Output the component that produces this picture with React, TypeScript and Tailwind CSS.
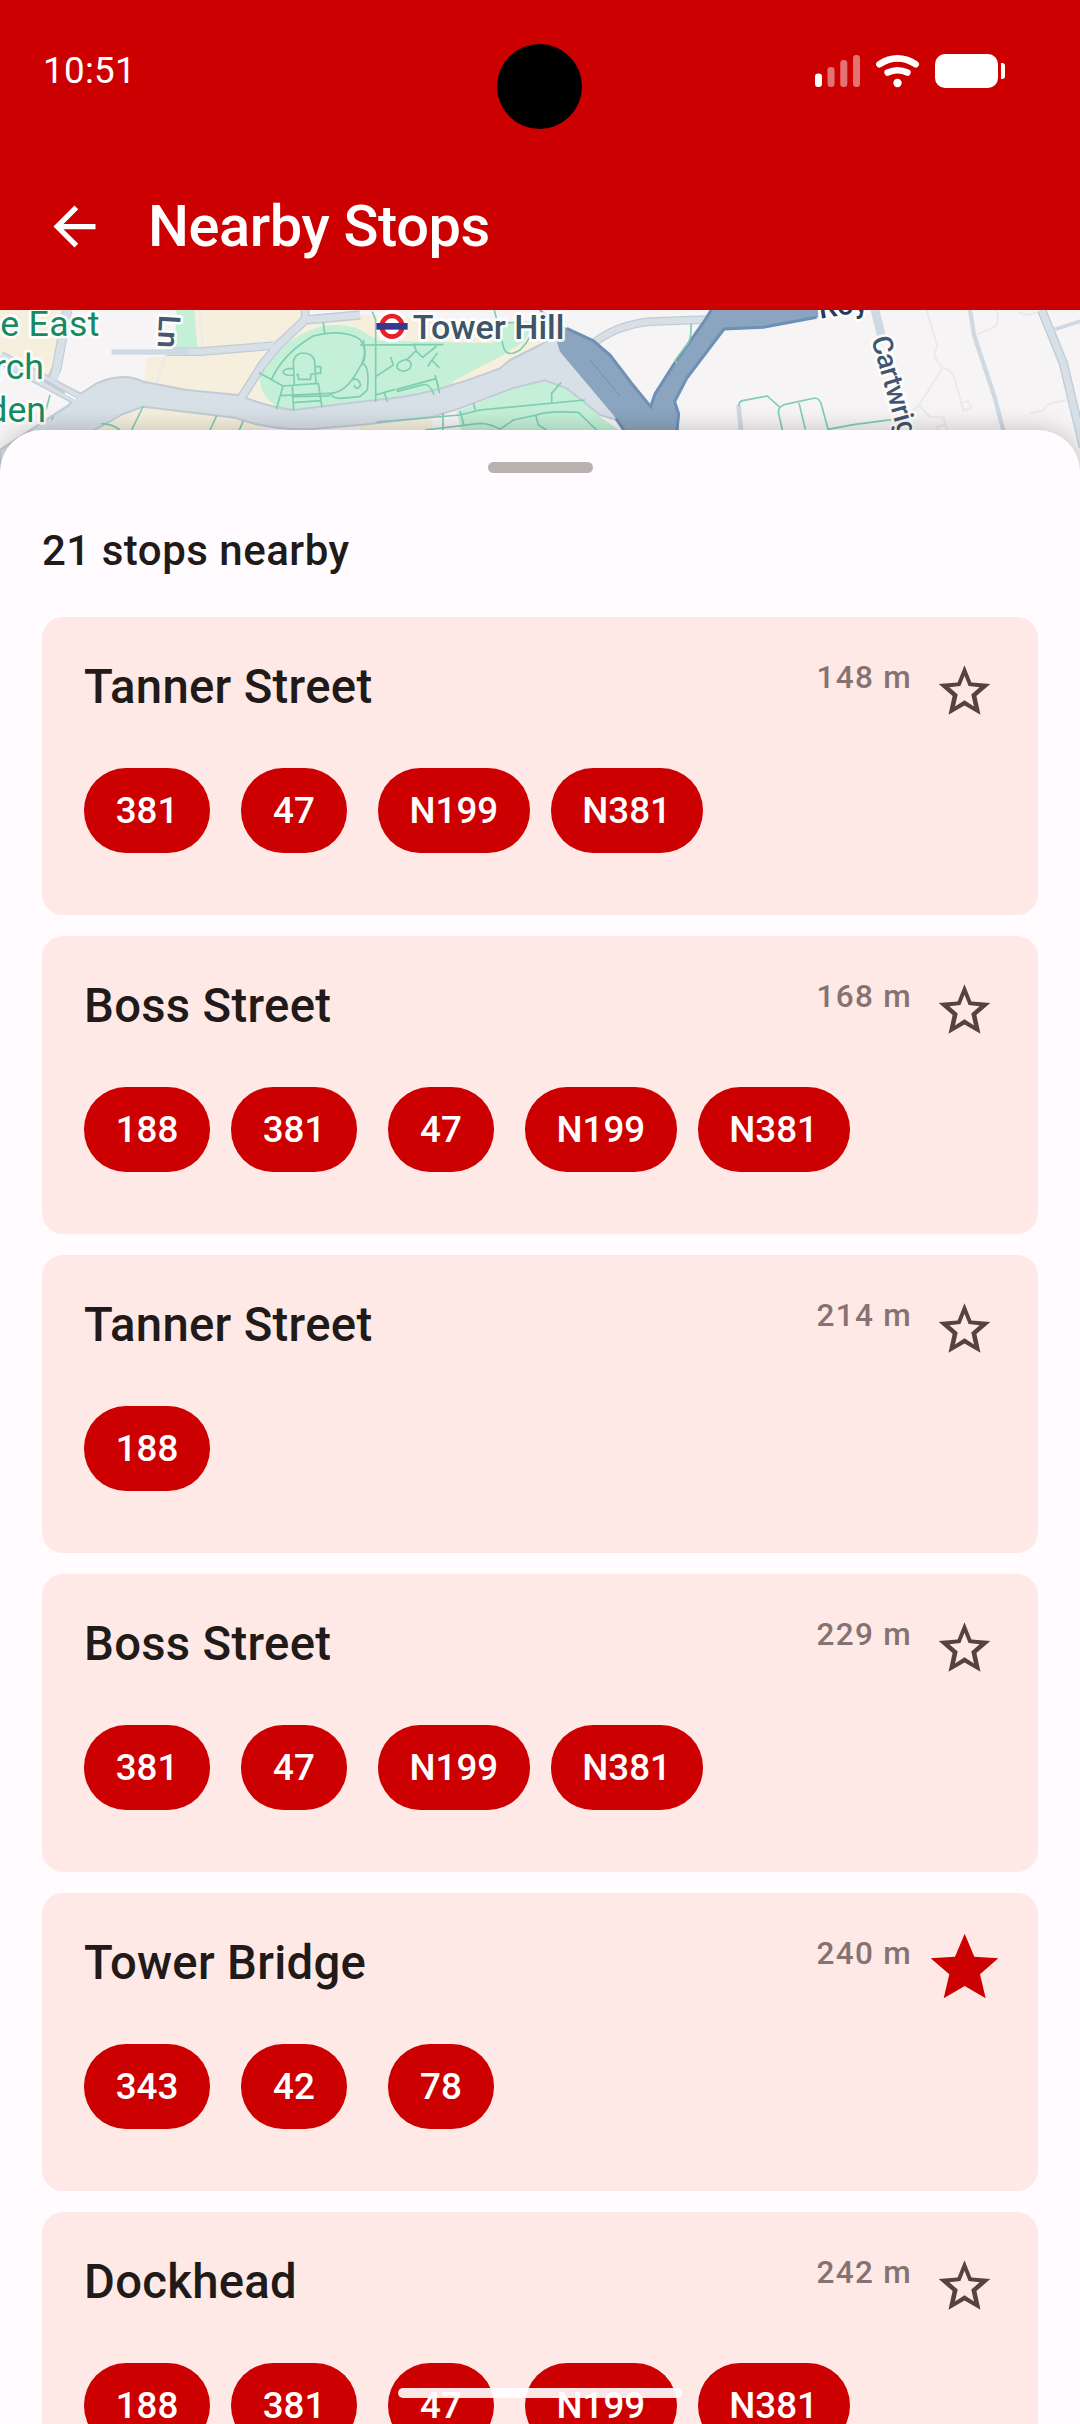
import type { ReactNode } from "react";

const stops = [
  { name: "Tanner Street", distance: "148 m", routes: ["381", "47", "N199", "N381"], starred: false },
  { name: "Boss Street", distance: "168 m", routes: ["188", "381", "47", "N199", "N381"], starred: false },
  { name: "Tanner Street", distance: "214 m", routes: ["188"], starred: false },
  { name: "Boss Street", distance: "229 m", routes: ["381", "47", "N199", "N381"], starred: false },
  { name: "Tower Bridge", distance: "240 m", routes: ["343", "42", "78"], starred: true },
  { name: "Dockhead", distance: "242 m", routes: ["188", "381", "47", "N199", "N381"], starred: false },
];

function StatusIcons() {
  return (
    <svg width="192" height="36" viewBox="814 53 192 36" fill="#fff">
      <rect x="815" y="73.5" width="7" height="13.5" rx="3.3" />
      <g opacity="0.45">
        <rect x="827.5" y="67" width="7" height="20" rx="3.3" />
        <rect x="840.3" y="60" width="7" height="27" rx="3.3" />
        <rect x="853" y="55" width="7" height="32" rx="3.3" />
      </g>
      <g fill="none" stroke="#fff" strokeWidth="6.6" strokeLinecap="round">
        <path d="M879.4 64.2 Q897.5 52.6 915.7 64.2" />
        <path d="M887.7 72.6 Q897.5 68 907.4 72.6" />
      </g>
      <circle cx="897.5" cy="83" r="4.2" />
      <rect x="935" y="54" width="63" height="34" rx="10" />
      <path d="M1001 63h1a3 3 0 0 1 3 3v10a3 3 0 0 1-3 3h-1z" />
    </svg>
  );
}

function BackArrow() {
  return (
    <svg width="63" height="63" viewBox="0 0 24 24" fill="#fff">
      <path d="M20 11H7.83l5.59-5.59L12 4l-8 8 8 8 1.41-1.41L7.83 13H20v-2z" />
    </svg>
  );
}

function Star({ filled }: { filled: boolean }) {
  if (filled) {
    return (
      <svg width="84" height="84" viewBox="0 0 84 84">
        <path d="M42.7 9.7L52.3 32.7L76.3 34.3L58 50.3L63.7 74.3L42.7 62L21.7 74.3L27.3 50.3L8.7 34.3L33 32.7Z" fill="#cc0000" />
      </svg>
    );
  }
  return (
    <svg width="84" height="84" viewBox="0 -1.8 84 84">
      <path
        fillRule="evenodd"
        d="M42.5 15.5L49.4 32.7L68.3 34.2L54.4 46.3L58.5 65L42.5 55.7L26.5 65L30.6 46.3L16.7 34.2L35.6 32.7ZM42.5 26L46.6 36.2L57.6 37.4L49.3 44.8L52 56.6L42.5 50.4L33 56.6L35.7 44.8L27.4 37.4L38.4 36.2Z"
        fill="#534341"
      />
    </svg>
  );
}

type LabelProps = {
  children: ReactNode;
  x?: number;
  y?: number;
  fontSize: number;
  fontWeight?: number;
  letterSpacing?: number;
  fill: string;
  transform?: string;
  textAnchor?: "start" | "end";
};

function Label({ children, fontWeight = 500, ...rest }: LabelProps) {
  return (
    <text {...rest} fontWeight={fontWeight} stroke="#fff" strokeOpacity="0.9" strokeWidth="16" strokeLinejoin="round" paintOrder="stroke">
      {children}
    </text>
  );
}

function MapStrip() {
  return (
    <svg className="block h-[162px] w-full shrink-0 font-[Roboto,sans-serif]" viewBox="0 30 3240 486">
      <rect y="30" width="3240" height="486" fill="#f6f4f5" />

      {/* blocks */}
      <g fill="#f6efdd">
        <path d="M0 30H190L175 190L150 238L0 160Z" />
        <path d="M525 30H910V70L820 130L600 145H525Z" />
        <path d="M440 175L505 165L800 152L720 287L470 258L432 245Z" />
        <path d="M770 220L915 72L1080 45L1480 60L1640 100V160L1360 260L1080 305L880 330L735 290Z" />
        <path d="M290 390L430 318L700 350L810 390Z" />
        <path d="M1080 372L1298 352V390H1080Z" />
      </g>
      <rect x="1300" y="30" width="180" height="35" fill="#f6f4f5" />

      {/* parks */}
      <g fill="#c3f0d6">
        <path d="M530 30H583L592 142H525Z" />
        <path d="M780 222C795 190 850 115 960 80C1010 70 1060 75 1090 95L1135 122L1480 130V60L1600 80L1570 125L1500 170L1440 200L1357 245L1364 262L1240 290L1080 312L960 320L880 328C820 325 775 290 780 222Z" />
        <path d="M1370 335L1540 265L1640 240L1720 270L1800 350L1870 400H1385Z" />
      </g>

      {/* faint footpaths */}
      <g fill="none" stroke="#ebe9ec" strokeWidth="6">
        <path d="M598 30L608 140M498 165L468 256" />
        <path d="M2780 30L2812 140L2803 160Q2805 180 2828 203Q2855 210 2862 230L2890 332L2915 322L2903 303L2883 310M2828 203L2757 316L2735 335M2757 316L2790 350L2830 352L2842 390M2990 30Q3000 70 2985 80L2930 103M3055 35Q3075 50 3110 38M3090 340L3130 332Q3140 310 3160 308L3200 300M2810 390V380L2840 372" />
      </g>

      {/* roads: edge first, then fill */}
      <g fill="none" strokeLinejoin="round">
        <g stroke="#c2ccd6">
          <path d="M202 30L170 205L155 240" strokeWidth="30" />
          <path d="M0 172L240 300" strokeWidth="40" />
          <path d="M500 155H600L820 137" strokeWidth="26" />
          <path d="M720 300L790 190L835 135L915 60L1080 45" strokeWidth="28" />
          <path d="M915 30V60" strokeWidth="26" />
          <path d="M1780 130Q1850 75 1950 65L2140 58" strokeWidth="26" />
          <path d="M3125 30L3190 190L3250 440" strokeWidth="28" />
        </g>
        <path d="M0 450L205 316L240 282L290 250Q370 215 430 245L560 270L715 285Q800 320 880 330L1080 305C1240 290 1300 280 1500 205L1530 180L1620 135L1700 90L1900 350L1850 360L1800 345L1700 265L1635 241L1540 264L1380 325L1300 350L1080 375L930 388Q800 390 705 353L430 320L370 342L280 392L100 516H0Z" fill="#d7dfe7" stroke="#c2ccd6" strokeWidth="6" />
        <g stroke="#d7dfe7">
          <path d="M202 30L170 205L160 240" strokeWidth="23" />
          <path d="M0 172L260 311" strokeWidth="32" />
          <path d="M500 155H600L820 137" strokeWidth="19" />
          <path d="M720 300L790 190L835 135L915 60L1080 45" strokeWidth="20" />
          <path d="M915 30V60" strokeWidth="18" />
          <path d="M1780 130Q1850 75 1950 65L2140 58" strokeWidth="19" />
          <path d="M3125 30L3190 190L3250 440" strokeWidth="20" />
        </g>
        <g stroke="#cfd9e3" strokeLinecap="round">
          <path d="M342 156H500M505 155H560" strokeWidth="16" />
          <path d="M2910 30L2922 105L2985 295L3012 400" strokeWidth="13" />
          <path d="M3165 88L3240 64" strokeWidth="11" />
          <path d="M2216 320L2224 400" strokeWidth="14" />
          <path d="M2625 30L2645 110" strokeWidth="26" />
        </g>
        <path d="M130 240L230 298" stroke="#c2ccd6" strokeWidth="10" />
        <path d="M195 279L228 298" stroke="#fff" strokeWidth="5" />
      </g>

      {/* river */}
      <path
        d="M1610 20L1700 85L1780 120L1830 165L1895 250L1950 322L1965 280L2020 195L2115 60L2135 20H2455V52L2290 82L2172 87L2060 235L2024 305L2038 342L2030 516H1960L1870 390L1840 345L1680 155L1660 90Z"
        fill="#8ba4bf"
      />
      <g fill="none" stroke="#6d90b4" strokeWidth="9">
        <path d="M1700 85L1780 122L1830 165L1895 250L1952 320L1965 282L2020 195L2115 60L2135 28" />
        <path d="M2450 52L2290 82L2172 87L2060 235L2024 305L2036 342L2030 400M1848 356L1874 394" />
        <path d="M1770 180L1860 288" strokeWidth="3" />
      </g>

      {/* park paths */}
      <g fill="none" stroke="#80cdb2" strokeWidth="5" strokeLinejoin="round">
        <path d="M970 68L974 98M815 237Q850 160 940 108Q1030 85 1080 118Q1110 165 1080 200Q1040 280 990 280L840 287M777 218L849 258L829 328M849 258L955 250L966 322M877 258L881 332M875 290L990 288M990 280Q1000 296 1020 295L1080 290M878 308L962 302" />
        <path d="M883 255L880 185Q885 160 910 159Q940 160 944 185L948 250M880 205Q850 205 849 217Q855 228 880 225M944 200H962V220H944M888 224H895V238H932V222H944M1055 240Q1075 230 1082 255Q1070 275 1062 255" />
        <path d="M1117 35L1127 60V305M1080 135L1240 134H1330M1090 120Q1100 160 1086 190Q1110 195 1102 270L1080 290M1240 130L1250 155L1268 172L1310 138M1313 158L1290 188L1284 200M1295 180L1318 203M1127 230L1180 195L1172 170M1220 180Q1240 185 1230 205Q1210 222 1192 205Q1185 185 1222 178L1250 150M1127 285L1185 268M1190 268L1308 236L1319 280M1190 268L1192 274L1270 254Q1290 250 1302 284M1305 225L1315 260M1152 275L1162 305" />
        <path d="M1483 30L1510 140Q1520 175 1560 150Q1580 130 1590 110M1490 68H1620M1130 366L1380 345L1440 330L1755 300M1655 308V280L1683 248M1420 310L1426 330M1380 332L1392 378M1329 340V390M1275 390L1440 370Q1470 370 1500 388L1540 360L1610 345Q1640 332 1735 337L1790 390M1607 345L1615 375L1640 390" />
        <path d="M430 318L395 390M303 372Q330 368 360 390M650 347L630 390M730 362L718 390M150 285L138 330M160 350L155 360M2073 70Q2075 120 2060 135L2026 180L2030 190" />
        <path d="M2218 318Q2215 305 2228 302L2302 288L2340 322L2352 314L2445 294Q2460 295 2466 320L2484 388L2560 374L2675 359M2340 322Q2332 330 2338 350L2347 390M2396 304L2416 388" />
      </g>

      <Label x={299} y={107} fontSize={107} fontWeight={400} letterSpacing={1} fill="#178a62" textAnchor="end">e East</Label>
      <Label x={132} y={236} fontSize={107} fontWeight={400} fill="#178a62" textAnchor="end">rch</Label>
      <Label x={138} y={365} fontSize={107} fontWeight={400} fill="#178a62" textAnchor="end">den</Label>
      <Label fontSize={90} fontWeight={600} fill="#46576f" transform="translate(478 44) rotate(93)">Ln</Label>
      <Label x={1238} y={116} fontSize={102} fill="#3e5468">Tower Hill</Label>
      <Label fontSize={88} fill="#263a59" transform="translate(2460 56) rotate(-9)">Roy</Label>
      <Label fontSize={84} letterSpacing={-1.5} fill="#44566e" transform="translate(2613 117) rotate(74)">Cartwrig</Label>

      {/* underground roundel */}
      <circle cx="1176" cy="79" r="48" fill="#fff" />
      <circle cx="1176" cy="79" r="31" fill="#fff" stroke="#e8202a" strokeWidth="14" />
      <rect x="1129" y="69" width="94" height="20" fill="#38388f" />
    </svg>
  );
}

function StopCard({ stop }: { stop: (typeof stops)[number] }) {
  return (
    <article className="h-[298px] shrink-0 rounded-[21px] bg-[#ffe9e6] px-[42px]">
      <div className="flex h-[151px] items-start">
        <h3 className="flex-1 pt-[39px] text-[47.25px] leading-[63px] font-medium tracking-[0.3px] text-[#201a19]">{stop.name}</h3>
        <span className="pt-[40px] text-[31.5px] leading-[42px] font-medium tracking-[1.3px] text-[#857371]">{stop.distance}</span>
        <button className="-mr-[10px] ml-[10px] pt-[31px]">
          <Star filled={stop.starred} />
        </button>
      </div>
      <div className="flex gap-[21px]">
        {stop.routes.map((route) => (
          <span key={route} className="flex min-w-[126px] justify-center">
            <span className="flex h-[85px] min-w-[106px] items-center justify-center rounded-[42px] bg-[#cc0000] px-[31.5px] text-[36.75px] font-medium text-white">{route}</span>
          </span>
        ))}
      </div>
    </article>
  );
}

export default function App() {
  return (
    <main className="relative flex h-[2424px] w-[1080px] flex-col overflow-hidden bg-[#fffbff] font-[Roboto,sans-serif]">
      <header className="h-[310px] shrink-0 bg-[#cc0000] text-white">
        <div className="flex h-[142px] items-center justify-between pr-[74px] pl-[43px]">
          <span className="pb-[2px] text-[36.75px] leading-[43px] tracking-[0.3px]">10:51</span>
          <StatusIcons />
        </div>
        <div className="flex h-[168px] items-center pl-[43px]">
          <BackArrow />
          <h1 className="ml-[42px] text-[57.75px] leading-[74px] font-medium tracking-[-0.4px]">Nearby Stops</h1>
        </div>
        <div className="absolute top-[44px] left-[497px] size-[85px] rounded-full bg-black" />
      </header>

      <MapStrip />

      <section className="relative -mt-[42px] flex flex-1 flex-col rounded-t-[42px] bg-[#fffbff] px-[42px] shadow-[0_0_24px_rgba(0,0,0,0.22)]">
        <div className="mx-auto mt-[32px] h-[11px] w-[105px] shrink-0 rounded-full bg-[#bab1b1]" />
        <h2 className="mt-[46px] mb-[35px] text-[42px] leading-[63px] font-medium tracking-[0.5px] text-[#201a19]">21 stops nearby</h2>
        <div className="flex flex-col gap-[21px]">
          {stops.map((stop, i) => (
            <StopCard key={i} stop={stop} />
          ))}
        </div>
      </section>

      <div className="absolute top-[2388px] left-[398px] h-[10px] w-[284px] rounded-full bg-white/90" />
    </main>
  );
}
